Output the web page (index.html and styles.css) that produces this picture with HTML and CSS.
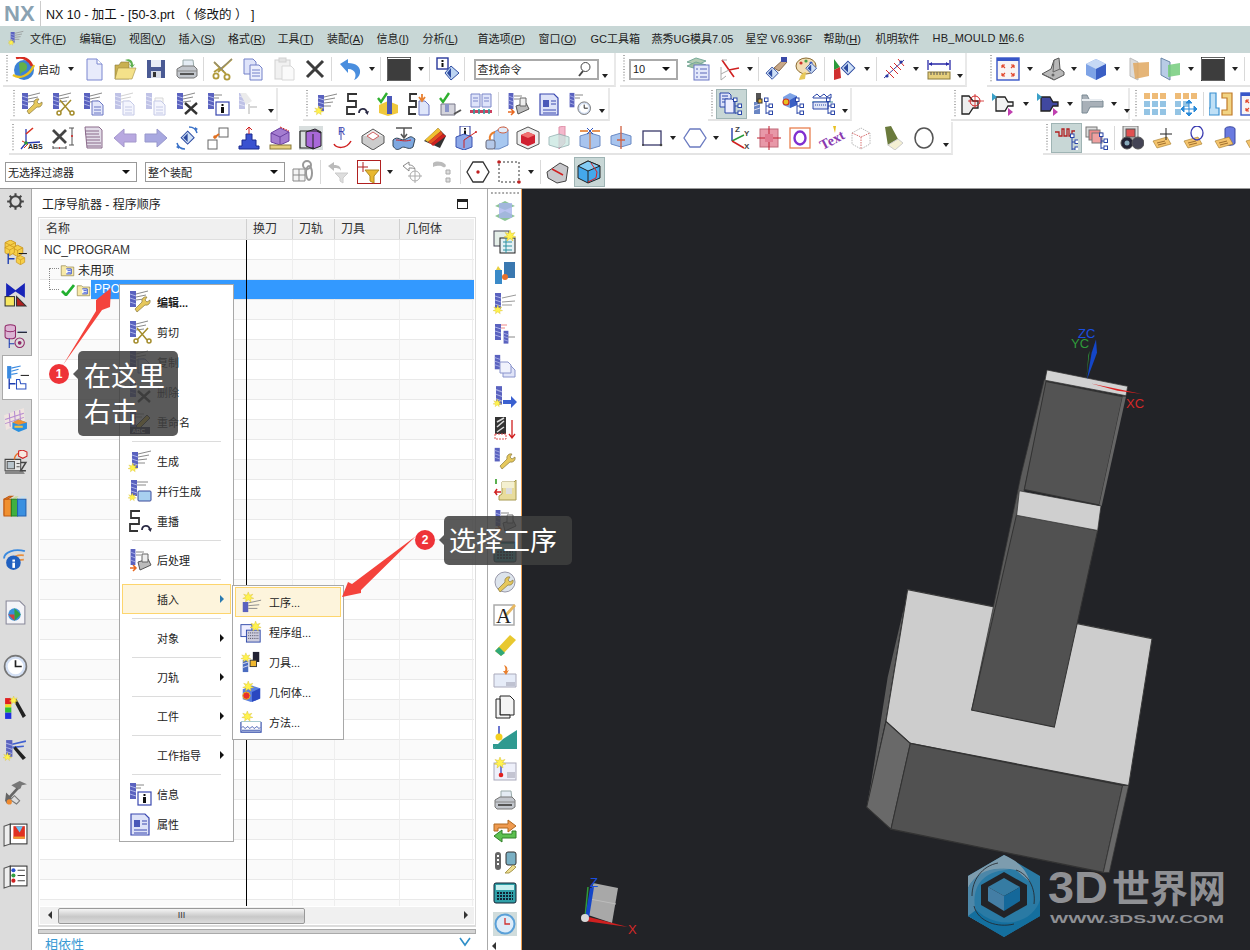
FILE: index.html
```html
<!DOCTYPE html>
<html lang="zh">
<head>
<meta charset="utf-8">
<title>NX 10 - 加工</title>
<link rel="stylesheet" href="styles.css">
</head>
<body>
<svg class="defs" width="0" height="0" aria-hidden="true">
<defs>
<g id="T"><rect x="2" y="1" width="6" height="16" fill="#5a62bf"/><path d="M2 4l6 2M2 8l6 2M2 12l6 2" stroke="#a9b0e6"/></g>
<path id="F" d="M8 4l12-3M8 7l10-2M8 10l8-1" stroke="#8a8a8a" fill="none"/>
<path id="W" d="M9 22l8-7a4 4 0 0 0 5-5l-3 2-2-2 2-3a4 4 0 0 0-5 5l-7 7z" fill="#e6c85c" stroke="#8a7a40" stroke-width=".7"/>
<g id="S" fill="none" stroke="#a48c2c" stroke-width="1.5"><path d="M9 8l10 12M20 8L9 20"/><circle cx="8" cy="21" r="2"/><circle cx="21" cy="21" r="2"/></g>
<g id="D"><path d="M10 9h7l4 4v10H10z" fill="#e3e7fa" stroke="#6a76c4"/><path d="M12 15h7M12 18h7M12 21h7" stroke="#6a76c4"/></g>
<path id="X" d="M10 11l12 11M22 11L10 22" stroke="#333" stroke-width="2.4"/>
<g id="Sp"><path d="M6 0l1.4 3.6L11 2.5 8.6 5.6 12 7l-3.6.8L9 11 6 8.6 3 11l.6-3.2L0 7l3.4-1.4L1 2.5l3.6 1.1z" fill="#fff24e" stroke="#d0b420" stroke-width=".4"/></g>
<g id="Tr" fill="#fff" stroke="#2b46a8"><path d="M16 9v13M16 14h3M16 21h3" fill="none"/><rect x="19" y="12" width="3.5" height="3.5"/><rect x="19" y="19" width="3.5" height="3.5"/><rect x="14.5" y="6" width="3.5" height="3.5"/></g>
<g id="Fo"><path d="M2 6h7l2 2h11v14H2z" fill="#f7e9a8" stroke="#8a7a40"/><path d="M10 11h8v8h-8" fill="#fff" stroke="#1c3cd0" stroke-width="1.4"/><path d="M12 13.5h5M12 16.5h5" stroke="#1c3cd0" stroke-width="1.2"/></g>
<g id="Cu"><path d="M12 2l10 5v11l-10 5-10-5V7z" fill="#7ea3e6"/><path d="M12 2l10 5-10 5L2 7z" fill="#c5d8f5"/><path d="M12 12l10-5v11l-10 5z" fill="#3a5fc4"/></g>
<g id="Clk"><circle cx="12" cy="12" r="10.5" fill="#d4e0f4" stroke="#777" stroke-width="1.6"/><circle cx="12" cy="12" r="7.5" fill="#fff"/><path d="M12 6v6h6" stroke="#222" stroke-width="1.6" fill="none"/></g>
<g id="Tg"><path d="M2 15l14-4 4 7-14 4z" fill="#f4c36c" stroke="#a37a28" stroke-width=".6"/><path d="M6 17l8-2M7 19l8-2" stroke="#8a5a20" stroke-width=".8"/></g>
<g id="Dm"><path d="M12 3l9 9-9 9-9-9z" fill="#cfe0f6" stroke="#2c4aa0" stroke-width="1.4"/><path d="M12 6v12l-6-6z" fill="#2c4aa0"/></g>
<g id="YCb"><path d="M6 0l5 2.500v5.500L6 11 1 8V2.500z" fill="#f6cf48" stroke="#c8921c" stroke-width=".8"/><path d="M1 2.500L6 5l5-2.500M6 5v6" fill="none" stroke="#c8921c" stroke-width=".7"/></g>
</defs>
<symbol id="fo" viewBox="0 0 24 24"><use href="#Fo"/></symbol>
<symbol id="globe" viewBox="0 0 24 24"><circle cx="13" cy="13" r="10" fill="#3c82d6"/><path d="M8 6c5-2 9 1 8 5s-6 3-7 7" fill="#63b04a"/><path d="M2 18C8 22 18 20 23 8" stroke="#e8c020" stroke-width="2.4" fill="none"/><path d="M5 1c7-2 14 2 16 8" stroke="#d62c20" stroke-width="2.6" fill="none"/></symbol>
<symbol id="newdoc" viewBox="0 0 24 24"><path d="M5 2h10l5 5v16H5z" fill="#e8ebfb" stroke="#7a86d0"/><path d="M15 2v5h5" fill="#fff" stroke="#7a86d0"/></symbol>
<symbol id="folder" viewBox="0 0 24 24"><path d="M2 22V8h4l2-3h8v17z" fill="#c9b050" stroke="#8a7a38" stroke-width=".6"/><path d="M2 22l3-11h18l-4 11z" fill="#f4e18a" stroke="#a08c40" stroke-width=".6"/><path d="M12 3c4-2 8 0 8 5l2-1-3 4-3-4 2 1c0-3-3-4-6-5z" fill="#5eb050"/></symbol>
<symbol id="save" viewBox="0 0 24 24"><path d="M3 3h18v18H3z" fill="#4a5a94"/><rect x="7" y="3" width="10" height="7" fill="#e8ecf6"/><rect x="7" y="14" width="10" height="7" fill="#d7dbe6"/><rect x="9" y="15" width="3" height="5" fill="#333"/></symbol>
<symbol id="print" viewBox="0 0 24 24"><path d="M8 3h10l1 8H8z" fill="#e4ecf4" stroke="#9aa"/><path d="M2 12l5-3h12l3 3v7l-3 2H4l-2-2z" fill="#c2c6cc" stroke="#777"/><path d="M2 14h20" stroke="#888"/><rect x="5" y="16" width="14" height="2" fill="#555"/></symbol>
<symbol id="scis" viewBox="0 0 24 24"><g fill="none" stroke="#b09a3c" stroke-width="1.8"><path d="M22 2L8 15M4 5l12 12M10 11l-6 4"/><circle cx="6" cy="19" r="2.6"/><circle cx="17" cy="20" r="2.6"/></g><path d="M22 2L10 12M4 5l10 9" stroke="#888" stroke-width="1"/></symbol>
<symbol id="copy" viewBox="0 0 24 24"><path d="M3 2h9l3 3v12H3z" fill="#dfe4fa" stroke="#7380c8"/><path d="M9 8h9l3 3v12H9z" fill="#eceffd" stroke="#7380c8"/><path d="M11 13h8M11 16h8M11 19h8" stroke="#7380c8"/></symbol>
<symbol id="paste" viewBox="0 0 24 24"><rect x="3" y="3" width="15" height="19" fill="#ddd" stroke="#888"/><rect x="7" y="1" width="7" height="4" fill="#bbb" stroke="#888"/><path d="M10 9h9l3 3v11H10z" fill="#f4f4f4" stroke="#999"/></symbol>
<symbol id="x" viewBox="0 0 24 24"><path d="M4 4l16 16M20 4L4 20" stroke="#3c3c3c" stroke-width="3"/></symbol>
<symbol id="undo" viewBox="0 0 24 24"><path d="M2 7l8-5v4c8 0 13 4 12 10-.5 3-3 6-6 7 3-4 2-11-6-11v4z" fill="#4a8ede"/></symbol>
<symbol id="blackbox" viewBox="0 0 24 24"><rect x="0" y="0" width="24" height="24" fill="#fff" stroke="#222" stroke-width="1.4"/><rect x="1" y="2" width="22" height="21" fill="#3d3d3d"/></symbol>
<symbol id="infod" viewBox="0 0 24 24"><rect x="1" y="1" width="11" height="11" fill="#fff" stroke="#28389c" stroke-width="1.4"/><path d="M5.5 3h2v2h-2zM5.5 6h2v4h-2z" fill="#111"/><path d="M15 9l8 7-8 7-6-7z" fill="#bcd4f2" stroke="#2c4aa0"/><path d="M15 11v10l-4-5z" fill="#2c4aa0"/></symbol>
<symbol id="layers" viewBox="0 0 24 24"><path d="M1 5l9-4 10 3-9 4z" fill="#b4ccb4" stroke="#7a9"/><path d="M1 9l9-4 10 3-9 4z" fill="#a0c0a0" stroke="#7a9"/><rect x="8" y="8" width="15" height="15" fill="#e3e8fb" stroke="#6a76c4"/><path d="M10 12h2M14 12h7M10 16h2M14 16h7M10 20h2M14 20h7" stroke="#5a66b8"/></symbol>
<symbol id="csys" viewBox="0 0 24 24"><path d="M12 13l10-2M12 13L5 3M12 13l5 7" stroke="#d02020" stroke-width="1.6" fill="none"/><path d="M5 3h5M12 13L4 17M4 10v13M4 23l5-4" stroke="#aaa" fill="none"/></symbol>
<symbol id="handd" viewBox="0 0 24 24"><path d="M10 11L20 2l3 3-8 9z" fill="#c8a888" stroke="#8a6c4c"/><rect x="17" y="0" width="6" height="5" fill="#3a4aa8"/><use href="#Dm" transform="translate(0 8) scale(.68)"/></symbol>
<symbol id="palette" viewBox="0 0 24 24"><ellipse cx="11" cy="9" rx="10" ry="8" fill="#f2deb4" stroke="#8a6a30"/><circle cx="6" cy="6" r="1.6" fill="#d0342c"/><circle cx="11" cy="4" r="1.6" fill="#46a046"/><circle cx="16" cy="6" r="1.6" fill="#3a5ed0"/><use href="#Dm" transform="translate(9 4) scale(.6)"/><path d="M4 23c1-5 4-8 7-8l-1 7z" fill="#e8c95a"/></symbol>
<symbol id="cdiam" viewBox="0 0 24 24"><use href="#Dm" transform="translate(6 2) scale(.75)"/><path d="M1 2l6 8-6 3z" fill="#2a9a3a"/><path d="M1 13l6-3 1 11-7 2z" fill="#d03030"/></symbol>
<symbol id="axis" viewBox="0 0 24 24"><path d="M2 21L22 3" stroke="#3a3aa0" stroke-width="1"/><path d="M4 13l8 8M8 9l8 8M12 6l7 7M16 2l6 7" stroke="#d82828" stroke-width="1"/><circle cx="5" cy="19" r="1.6" fill="#2838a0"/><circle cx="19" cy="5" r="1.6" fill="#2838a0"/></symbol>
<symbol id="ruler" viewBox="0 0 24 24"><path d="M1 3v10M23 3v10M2 7h20" stroke="#2a2aa8" stroke-width="1.3"/><path d="M2 7l3-2v4zM22 7l-3-2v4z" fill="#2a2aa8"/><rect x="1" y="15" width="22" height="7" fill="#e6cf7c" stroke="#8a7a3a"/><path d="M4 15v3M7 15v3M10 15v3M13 15v3M16 15v3M19 15v3" stroke="#555"/></symbol>
<symbol id="fit" viewBox="0 0 24 24"><rect x="1" y="1" width="22" height="22" fill="#f8f4f4" stroke="#3856c8" stroke-width="1.4"/><rect x="1" y="1" width="22" height="3" fill="#3856c8"/><path d="M6 8l3 3M6 8h3M6 8v3M18 8l-3 3M18 8h-3M18 8v3M6 19l3-3M6 19h3M6 19v-3M18 19l-3-3M18 19h-3M18 19v-3" stroke="#e2472c" stroke-width="1.2" fill="none"/></symbol>
<symbol id="brkt" viewBox="0 0 24 24"><path d="M1 17l9-5 3-9 5-2 1 11 4 3v3l-10 5z" fill="#b8b8b8" stroke="#555"/><path d="M1 17l11 5M13 3l-1 12 7-3" fill="none" stroke="#666"/><circle cx="12" cy="18" r="1.5" fill="#666"/></symbol>
<symbol id="cube" viewBox="0 0 24 24"><use href="#Cu"/></symbol>
<symbol id="oplane" viewBox="0 0 24 24"><path d="M3 1l8 4v18l-8-4z" fill="#dcdcdc" stroke="#bbb"/><path d="M6 6l16-1v14l-14 3z" fill="#e0a860" opacity=".85"/></symbol>
<symbol id="gplane" viewBox="0 0 24 24"><path d="M3 1l9 4v18l-9-5z" fill="#b8cce6" stroke="#6a86a8"/><path d="M10 8l12-2v12l-12 2z" fill="#74cc7c" opacity=".85"/></symbol>
<symbol id="tedit" viewBox="0 0 24 24"><use href="#T"/><use href="#F"/><use href="#W"/></symbol>
<symbol id="tcut" viewBox="0 0 24 24"><use href="#T"/><use href="#F"/><use href="#S"/></symbol>
<symbol id="tcopy" viewBox="0 0 24 24"><use href="#T"/><use href="#F"/><use href="#D"/></symbol>
<symbol id="tpaste" viewBox="0 0 24 24"><use href="#T"/><path d="M11 6h8v14h-8z" fill="#eee" stroke="#999"/><use href="#D"/></symbol>
<symbol id="tdel" viewBox="0 0 24 24"><use href="#T"/><use href="#F"/><use href="#X"/></symbol>
<symbol id="tinfo" viewBox="0 0 24 24"><use href="#T"/><path d="M8 3h8M8 6h5" stroke="#888"/><rect x="10" y="10" width="13" height="13" fill="#fff" stroke="#3a48b0" stroke-width="1.2"/><path d="M15.5 12h2v2h-2zM15 15h3v6h-3z" fill="#111"/></symbol>
<symbol id="tmov" viewBox="0 0 24 24"><use href="#T"/><path d="M3 1l6 0 6 8-6 4" fill="#ccc"/><path d="M12 12v10M12 15h8" stroke="#999" fill="none" stroke-width="2"/></symbol>
<symbol id="gen" viewBox="0 0 24 24"><use href="#T" transform="translate(2 2)"/><path d="M10 5l13-3M10 8l11-2M10 11l9-1M10 14l7 0" stroke="#8a8a8a" fill="none"/><use href="#Sp" transform="translate(0 14) scale(.8)"/></symbol>
<symbol id="gensub" viewBox="0 0 24 24"><use href="#T" transform="translate(1 0)"/><use href="#Sp" transform="translate(0 14) scale(.7)"/><path d="M9 3h11M9 6h9" stroke="#888"/><rect x="10" y="12" width="13" height="10" rx="1" fill="#a8d0f0" stroke="#3a4a9a"/></symbol>
<symbol id="replay" viewBox="0 0 24 24"><path d="M12 2H3v7h8v6H2v7h8" fill="none" stroke="#333" stroke-width="1.8"/><path d="M14 21c0-5 7-6 8 0" fill="none" stroke="#2a2a44" stroke-width="1.8"/><path d="M20 20l2.500 3 1.500-4z" fill="#2a2a44"/></symbol>
<symbol id="verify" viewBox="0 0 24 24"><path d="M2 6l3 4 6-9" stroke="#2fb02f" stroke-width="2.400" fill="none"/><path d="M3 13l9-4 10 4v8l-10 3-9-3z" fill="#f0c83c"/><path d="M11 4h5v18h-5z" fill="#4a58b8"/></symbol>
<symbol id="postdoc" viewBox="0 0 24 24"><path d="M10 2H3v7h6v6H2v7h7" fill="none" stroke="#333" stroke-width="1.800"/><path d="M12 9h6l4 4v10H12z" fill="#dfe6fa" stroke="#6a76c4"/><path d="M15 2v7M12 5l3 4 3-4" stroke="#e88030" stroke-width="1.800" fill="none"/></symbol>
<symbol id="chkm" viewBox="0 0 24 24"><path d="M2 6l3 4 6-9" stroke="#2fb02f" stroke-width="2.400" fill="none"/><path d="M3 12h14v11H3z" fill="#d4d4dc" stroke="#778"/><path d="M7 12h4v8H7z" fill="#8a94c8"/><path d="M16 22l7-4" stroke="#555" stroke-width="2"/></symbol>
<symbol id="shop" viewBox="0 0 24 24"><path d="M2 2h9v13H2zM13 2h9v13h-9z" fill="#dfe4fa" stroke="#7a86c8"/><path d="M4 6h5M4 9h5M15 6h5M15 9h5" stroke="#7a86c8"/><rect x="1" y="18" width="22" height="3" fill="#cc4060"/><path d="M5 17v5M10 17v5M15 17v5M20 17v5" stroke="#30a0a0" stroke-width="1.600"/></symbol>
<symbol id="tpost" viewBox="0 0 24 24"><use href="#T" transform="translate(1 0) scale(.8 1)"/><path d="M8 4h8M8 7h5" stroke="#888"/><path d="M10 14l10-3 3 6-11 5z" fill="#bbb" stroke="#555"/><path d="M14 6h6v8h-6z" fill="#eee" stroke="#666"/><path d="M2 20h5M5 17l3 3-3 3" stroke="#e86820" stroke-width="1.500" fill="none"/></symbol>
<symbol id="tlist" viewBox="0 0 24 24"><path d="M3 2h14l4 4v17H3z" fill="#dde2f8" stroke="#3a48b0" stroke-width="1.200"/><path d="M6 8h6v7H6z" fill="#4a58b8"/><path d="M14 9h5M14 12h5M6 18h13M6 21h13" stroke="#3a48b0"/></symbol>
<symbol id="tclk" viewBox="0 0 24 24"><use href="#T" transform="scale(.8 .9)"/><path d="M7 3h8M7 6h5" stroke="#888"/><use href="#Clk" transform="translate(9 9) scale(.6)"/></symbol>
<symbol id="pv" viewBox="0 0 24 24"><path d="M1 1h9l2 2v12H1z" fill="#dde2fa" stroke="#2b46a8"/><path d="M3 4h6M3 7h6M3 10h6" stroke="#2b46a8"/><path d="M6 7h7l2 2v12H6z" fill="#eef" stroke="#2b46a8"/><use href="#Tr"/></symbol>
<symbol id="mv" viewBox="0 0 24 24"><path d="M6 1h5v9H6z" fill="#555"/><path d="M4 10h6v12H4z" fill="#6a86c4"/><path d="M4 14l6-2M4 18l6-2" stroke="#dde"/><rect x="8" y="7" width="4" height="4" fill="#e8b030" stroke="#333"/><use href="#Tr"/></symbol>
<symbol id="gv" viewBox="0 0 24 24"><path d="M2 5l7-4 7 3v9l-7 3-7-3z" fill="#7ea3e6"/><path d="M9 8l7-4v9l-7 3z" fill="#3a5fc4"/><circle cx="5" cy="10" r="3" fill="#e8c020" stroke="#d03020" stroke-width="1.200"/><use href="#Tr"/></symbol>
<symbol id="mtv" viewBox="0 0 24 24"><path d="M1 5l4-3 3 3 4-3 3 3 4-3v4H1z" fill="#fff" stroke="#2b46a8"/><path d="M0 10h21" stroke="#3d8a9a"/><path d="M1 10h15v7H1z" fill="#dfe6f6" stroke="#2b46a8"/><path d="M3 13h11" stroke="#2b46a8" stroke-dasharray="1 1"/><use href="#Tr"/></symbol>
<symbol id="lat1" viewBox="0 0 24 24"><path d="M1 4h7l4 5h5v7h-5l-4 6H1z" fill="#eee" stroke="#222" stroke-width="1.300"/><circle cx="14" cy="9" r="5" fill="none" stroke="#d02020"/><path d="M14 2v14M7 9h16" stroke="#d02020" stroke-width=".8"/></symbol>
<symbol id="lat2" viewBox="0 0 24 24"><path d="M4 5h9l3 5h5v4h-5l-3 5H4z" fill="#f2f2f2" stroke="#222" stroke-width="1.300"/><path d="M0 1l5 4-5 4z" fill="#3aa0c8"/><path d="M16 16l5 4-5 4z" fill="#c040b0"/></symbol>
<symbol id="lat3" viewBox="0 0 24 24"><path d="M4 5h9l3 5h5v4h-5l-3 5H4z" fill="#4048a0" stroke="#222" stroke-width="1.300"/><path d="M0 1l5 4-5 4z" fill="#3aa0c8"/><path d="M16 16l5 4-5 4z" fill="#c040b0"/></symbol>
<symbol id="lat4" viewBox="0 0 24 24"><path d="M2 3h5l3 6h13v6H10l-3 6H2z" fill="#a8b0b8" stroke="#7a8a94"/><path d="M2 8h20" stroke="#e8ecf0" stroke-width="2"/></symbol>
<symbol id="grid1" viewBox="0 0 24 24"><g fill="#eebb77"><rect x="1" y="1" width="6" height="6"/><rect x="9" y="1" width="6" height="6"/><rect x="17" y="1" width="6" height="6"/></g><g fill="#94c4e4"><rect x="1" y="9" width="6" height="6"/><rect x="9" y="9" width="6" height="6"/><rect x="17" y="9" width="6" height="6"/><rect x="1" y="17" width="6" height="6"/><rect x="9" y="17" width="6" height="6"/><rect x="17" y="17" width="6" height="6"/></g></symbol>
<symbol id="grid2" viewBox="0 0 24 24"><g fill="#eebb77"><rect x="1" y="1" width="6" height="6"/><rect x="9" y="1" width="6" height="6"/><rect x="17" y="1" width="6" height="6"/></g><g fill="#94c4e4"><rect x="1" y="9" width="6" height="6"/><rect x="9" y="9" width="6" height="6"/><rect x="1" y="17" width="6" height="6"/></g><path d="M15 10v13M9 17h13M15 8l-3 3h6zM15 24l-3-3h6zM7 17l3-3v6zM23 17l-3-3v6z" fill="#2a8ad8" stroke="#2a8ad8"/></symbol>
<symbol id="bkt2" viewBox="0 0 24 24"><path d="M1 1h6v15h3v7H0v-7h1z" fill="#bfe0f6" stroke="#3a90d0" stroke-width="1.200"/><path d="M13 1h10v22H13v-5h5V6h-5z" fill="#f2d484" stroke="#c07a28" stroke-width="1.200"/></symbol>
<symbol id="abs" viewBox="0 0 24 24"><path d="M6 17V3M6 17l14-1M6 17l-5 6" stroke="#2a3ab0" stroke-width="1.300"/><path d="M6 8l7-6" stroke="#d83020" stroke-width="1.600"/><path d="M2 15l6 3-4 4" stroke="#d83020" fill="none"/><circle cx="6" cy="17" r="1.800" fill="#2a9a3a"/></symbol>
<symbol id="xdim" viewBox="0 0 24 24"><path d="M2 4l13 13M15 4L2 17" stroke="#444" stroke-width="2.800"/><path d="M18 2h5M21 2v17M18 19h5M2 20v3M15 20v3M2 22h13" stroke="#555" fill="none"/><path d="M20 10h2M8 22h1" stroke="#d02020" stroke-width="1.500"/></symbol>
<symbol id="stack" viewBox="0 0 24 24"><path d="M3 1h14l3 3v18H5z" fill="#e2dce8" stroke="#8a6a8a"/><path d="M3 5h14M3 8h14M4 11h14M4 14h14M5 17h14M5 20h14" stroke="#8a6a8a"/></symbol>
<symbol id="al" viewBox="0 0 24 24"><path d="M1 12L11 3v5h12v8H11v5z" fill="#b8a8e0" stroke="#a498cc"/></symbol>
<symbol id="ar" viewBox="0 0 24 24"><path d="M23 12L13 3v5H1v8h12v5z" fill="#a8a8e0" stroke="#9898cc"/></symbol>
<symbol id="dsw" viewBox="0 0 24 24"><use href="#Dm" transform="translate(4 3) scale(.72)"/><path d="M14 1c4 0 7 2 8 6M10 23c-4 0-7-2-8-6" stroke="#3a72c8" fill="none" stroke-width="1.500"/><path d="M20 1l3 2-3 2zM4 23l-3-2 3-2z" fill="#3a72c8"/></symbol>
<symbol id="sqs" viewBox="0 0 24 24"><rect x="2" y="14" width="9" height="9" fill="#fff" stroke="#666"/><rect x="13" y="2" width="9" height="9" fill="#fff" stroke="#666"/><path d="M8 12l5-4" stroke="#e07020" stroke-width="2"/><circle cx="9" cy="11" r="1.800" fill="#e07020"/></symbol>
<symbol id="blu" viewBox="0 0 24 24"><path d="M5 20V14h4V8h6v6h4v6h3v3H2v-3z" fill="#3a52d0" stroke="#1a2a90"/><path d="M12 8V2M9 4l3-3 3 3" stroke="#d02020" fill="none"/></symbol>
<symbol id="rulb" viewBox="0 0 24 24"><path d="M3 7l9-5 9 4v9l-9 4-9-3z" fill="#a47cd0" stroke="#6a40a0"/><path d="M3 7l9 4 9-5M12 11v8" stroke="#6a40a0" fill="none"/><rect x="2" y="19" width="21" height="4" fill="#e6cf7c" stroke="#8a7a3a"/><path d="M12 1l9 4" stroke="#d02020" stroke-dasharray="2 1"/></symbol>
<symbol id="purp" viewBox="0 0 24 24"><rect x="0" y="0" width="24" height="24" fill="#d8dede"/><path d="M7 6l9-3 6 3v14l-8 3-7-3z" fill="#a868d8" stroke="#222"/><path d="M1 5h17l4 2M1 5v17h14" fill="none" stroke="#222" stroke-width="1.200"/><path d="M14 8v15" stroke="#222"/></symbol>
<symbol id="rr" viewBox="0 0 24 24"><path d="M4 18c2 4 12 6 17-3" fill="none" stroke="#d02020" stroke-width="1.500"/><path d="M11 14V2" stroke="#3a46b0"/></symbol>
<symbol id="mesh" viewBox="0 0 24 24"><path d="M1 10l11-7 11 7-11 7z" fill="#eee" stroke="#555"/><path d="M1 10v7l11 7 11-7v-7" fill="#ccc" stroke="#555"/><path d="M6 10l6-4 6 4-6 4z" fill="#fff" stroke="#d06060"/></symbol>
<symbol id="surf" viewBox="0 0 24 24"><path d="M1 14c5-5 8 2 13-1s5-3 9 0l-2 8c-5 4-8-2-12 1s-6 1-8-2z" fill="#7ea8e0" stroke="#345"/><path d="M4 14c5 0 8 2 15 0" stroke="#d02020" fill="none"/><path d="M4 2h16M12 2v10M9 8l3 4 3-4" stroke="#555" fill="none" stroke-width="1.500"/></symbol>
<symbol id="strp" viewBox="0 0 24 24"><path d="M1 15L15 2l8 8-6 12z" fill="#333"/><path d="M2 14L15 2l3 3L5 16z" fill="#f0c030"/><path d="M5 16L18 5l2 3L8 18z" fill="#e85020"/><path d="M8 18L20 8l3 2-13 10z" fill="#d02020"/></symbol>
<symbol id="infc" viewBox="0 0 24 24"><rect x="6" y="0" width="10" height="10" fill="#fff" stroke="#28389c"/><path d="M10 2h2v1.500h-2zM10 4.500h2v4h-2z" fill="#111"/><path d="M2 11l8-3 8 3v10l-8 3-8-3z" fill="#8ca8e8" stroke="#3a52b0"/><path d="M10 14l12-8M10 14v8" stroke="#d02020"/><circle cx="22" cy="6" r="1" fill="#d02020"/></symbol>
<symbol id="cyl" viewBox="0 0 24 24"><path d="M9 6l10-5 4 3v15l-9 4H9z" fill="#a8c8f0" stroke="#6a8ac4"/><ellipse cx="18" cy="4" rx="5" ry="3" fill="#e0ecfa" stroke="#d06040"/><rect x="1" y="14" width="9" height="9" rx="2" fill="#b4c8e8" stroke="#667"/><path d="M5 14c-1-4 1-7 5-8" stroke="#e88030" stroke-width="2" fill="none"/></symbol>
<symbol id="rcube" viewBox="0 0 24 24"><path d="M12 1l11 5v12l-11 5-11-5V6z" fill="#eee" stroke="#555"/><path d="M12 6l7 3v8l-7 3-7-3V9z" fill="#d02030"/><path d="M12 6l7 3-7 3-7-3z" fill="#f07070"/></symbol>
<symbol id="pink" viewBox="0 0 24 24"><path d="M12 1l6-1v17l-6 6z" fill="#f4b8cc" stroke="#e090a8"/><path d="M2 11l10-3 10 3v8l-10 3-10-3z" fill="#c8e6e0" opacity=".75" stroke="#8aa"/></symbol>
<symbol id="split" viewBox="0 0 24 24"><path d="M2 10l10-3 10 3v10l-10 3-10-3z" fill="#a8c4ee" stroke="#6a8ac4"/><path d="M12 5v18" stroke="#e07020"/><path d="M2 5h8M22 5h-8" stroke="#e07020" stroke-width="1.500"/><path d="M9 2l3 3-3 3M15 2l-3 3 3 3" stroke="#2a52c0" fill="none"/></symbol>
<symbol id="split2" viewBox="0 0 24 24"><path d="M2 10l10-3 10 3v8l-10 3-10-3z" fill="#a8c4ee" stroke="#6a8ac4"/><path d="M12 0v23M8 14h8" stroke="#d06040" stroke-width="1.300"/></symbol>
<symbol id="rect" viewBox="0 0 24 24"><rect x="3" y="5" width="18" height="14" fill="#fff" stroke="#3a3a6a" stroke-width="1.300"/><circle cx="21" cy="19" r="1.300" fill="#444"/><circle cx="3" cy="19" r="1" fill="#444"/></symbol>
<symbol id="hexa" viewBox="0 0 24 24"><path d="M7 3h10l6 9-6 9H7l-6-9z" fill="#fff" stroke="#6a7ac0" stroke-width="1.300"/></symbol>
<symbol id="xyz" viewBox="0 0 24 24"><path d="M6 15V2" fill="none" stroke="#3048b0" stroke-width="1.500"/><path d="M6 15l12-6" stroke="#2a9a3a" stroke-width="1.500"/><path d="M6 15l12 7" stroke="#d02020" stroke-width="1.500"/></symbol>
<symbol id="rsq" viewBox="0 0 24 24"><rect x="3" y="3" width="18" height="18" fill="#e898a8" stroke="#c06878"/><path d="M12 0v24M0 12h24" stroke="#c02030"/><path d="M8 8h8v8H8z" fill="#e07a90"/></symbol>
<symbol id="oo" viewBox="0 0 24 24"><rect x="2" y="2" width="20" height="20" fill="#fff" stroke="#e88050" stroke-width="1.300"/><ellipse cx="12" cy="12" rx="5.500" ry="6.500" fill="none" stroke="#8030d0" stroke-width="2.400"/></symbol>
<symbol id="wcube" viewBox="0 0 24 24"><path d="M2 7l9-5 9 5v11l-9 5-9-5z" fill="#fff" stroke="#b8b8b8" stroke-dasharray="1.500 1"/><path d="M2 7l9 4 9-4M11 11v12" stroke="#d87070" fill="none" stroke-dasharray="1.500 1"/></symbol>
<symbol id="bell" viewBox="0 0 24 24"><path d="M4 1l6-1 7 13-10 7z" fill="#6a7a3c"/><path d="M7 19l10-6 5 4-8 7z" fill="#f4f0d4" stroke="#ccc"/></symbol>
<symbol id="circ" viewBox="0 0 24 24"><ellipse cx="12" cy="12" rx="9" ry="10" fill="none" stroke="#555" stroke-width="1.600"/></symbol>
<symbol id="tpv2" viewBox="0 0 24 24"><rect x="0" y="0" width="24" height="24" fill="#c8d7d6"/><path d="M1 6h4v4h3V3h2v7h3V3h2v7h3V5h3" fill="none" stroke="#b02020" stroke-width="1.300"/><use href="#Tr" transform="translate(2 2)"/></symbol>
<symbol id="tree2" viewBox="0 0 24 24"><rect x="1" y="1" width="11" height="10" fill="#ddd" stroke="#777"/><rect x="4" y="4" width="11" height="10" fill="#e88" stroke="#777"/><rect x="7" y="7" width="10" height="10" fill="#f0a0a0" stroke="#777"/><use href="#Tr" transform="translate(0 1)"/></symbol>
<symbol id="binoc" viewBox="0 0 24 24"><rect x="3" y="0" width="15" height="13" fill="#ddd" stroke="#777"/><rect x="6" y="3" width="9" height="8" fill="#e05050" stroke="#555"/><circle cx="7" cy="17" r="6" fill="#223" stroke="#555"/><circle cx="18" cy="17" r="6" fill="#445" stroke="#555"/><circle cx="7" cy="17" r="2.500" fill="#8ab"/></symbol>
<symbol id="tgp" viewBox="0 0 24 24"><use href="#Tg"/><path d="M15 2v12M9 8h12" stroke="#222"/></symbol>
<symbol id="tgo" viewBox="0 0 24 24"><use href="#Tg"/><ellipse cx="15" cy="7" rx="6" ry="7" fill="none" stroke="#3a3ab0" stroke-width="1.300"/></symbol>
<symbol id="tgc" viewBox="0 0 24 24"><path d="M12 3c0-3 10-3 10 0v14c0 3-10 3-10 0z" fill="#6a7ae0" stroke="#3a48a0"/><use href="#Tg"/></symbol>
<symbol id="link" viewBox="0 0 24 24"><path d="M2 9h12v12H2zM2 15h12M8 9v12" fill="#f4f4f4" stroke="#888"/><circle cx="16" cy="5" r="4" fill="none" stroke="#999" stroke-width="2"/><ellipse cx="18" cy="13" rx="3" ry="7" fill="none" stroke="#999" stroke-width="2"/></symbol>
<symbol id="ufil" viewBox="0 0 24 24"><path d="M2 6l6-4v3c5 0 7 2 7 6-1-3-4-3-7-3v3z" fill="#bbb"/><path d="M9 13h13l-5 5v5l-3-2v-3z" fill="#ddd" stroke="#ccc"/></symbol>
<symbol id="fil" viewBox="0 0 24 24"><rect x=".5" y=".5" width="23" height="23" fill="#fff" stroke="#b02020"/><path d="M8 10h14l-5 6v7l-4-2v-5z" fill="#e8b830" stroke="#b08820"/><path d="M6 2v10M1 7h10" stroke="#b02020"/></symbol>
<symbol id="utgt" viewBox="0 0 24 24"><path d="M3 6l6-4v3c4 0 5 2 6 4-2-1-3-1-6-1v3z" fill="none" stroke="#888"/><circle cx="15" cy="16" r="5" fill="none" stroke="#aaa"/><path d="M15 9v14M8 16h14" stroke="#aaa"/></symbol>
<symbol id="chn" viewBox="0 0 24 24"><path d="M2 3c3-2 8-2 12 1 2 2 0 4-2 3S8 5 2 7z" fill="#bbb"/><path d="M15 10h4v4h-4zM15 18h4v4h-4z" fill="#ddd" stroke="#aaa"/></symbol>
<symbol id="hexd" viewBox="0 0 24 24"><path d="M7 2h10l6 10-6 10H7L1 12z" fill="#fff" stroke="#333" stroke-width="1.300"/><circle cx="12" cy="12" r="1.700" fill="#c02020"/></symbol>
<symbol id="rectd" viewBox="0 0 24 24"><rect x="2" y="2" width="20" height="20" fill="none" stroke="#333" stroke-dasharray="2 2"/><circle cx="2" cy="2" r="1.800" fill="#c02020"/><circle cx="22" cy="22" r="1.800" fill="#c02020"/></symbol>
<symbol id="face" viewBox="0 0 24 24"><path d="M1 12L14 3l8 4-2 14-9 2-9-5z" fill="#c8c8cc" stroke="#444"/><path d="M6 9l11 6" stroke="#d02020" stroke-width="1.500"/></symbol>
<symbol id="cubea" viewBox="0 0 24 24"><path d="M11 1l12 5v12l-12 5L1 18V6z" fill="#44a8ec" stroke="#222"/><path d="M11 1l12 5-12 5L1 6z" fill="#84ccf4" stroke="#222"/><path d="M11 11v12" stroke="#222"/><path d="M14 3l6 9-1 6-8 4" stroke="#e02020" fill="none"/></symbol>
<symbol id="gear" viewBox="0 0 24 24"><circle cx="12" cy="12" r="5" fill="none" stroke="#444" stroke-width="2"/><path d="M12 4v3M12 17v3M4 12h3M17 12h3M6.400 6.400l2 2M15.600 15.600l2 2M6.400 17.600l2-2M15.600 8.400l2-2" stroke="#444" stroke-width="2"/></symbol>
<symbol id="r1" viewBox="0 0 24 24"><use href="#YCb" transform="translate(1 0)"/><use href="#YCb" transform="translate(8 5)"/><use href="#YCb" transform="translate(1 5) scale(.9)"/><path d="M5 13v10M5 18h6" stroke="#1c3cb0" stroke-width="1.300" fill="none"/><path d="M15 13h8" stroke="#222"/><use href="#YCb" transform="translate(12 15) scale(.8)"/></symbol>
<symbol id="r2" viewBox="0 0 24 24"><path d="M3 1l9 7 9-7v14l-9-6-9 6z" fill="#1824b8"/><rect x="2" y="14" width="9" height="9" fill="#f8e860" stroke="#333"/><path d="M13 23V14l9 9z" fill="#b02020" stroke="#333"/></symbol>
<symbol id="r3" viewBox="0 0 24 24"><path d="M2 3c0-3 10-3 10 0v9c0 3-10 3-10 0z" fill="#dcb4d4" stroke="#902868"/><path d="M2 6c2 2 8 2 10 0" fill="none" stroke="#902868"/><path d="M14 8h9M6 14v9M6 19h5" stroke="#1c3cb0" fill="none"/><path d="M14 8h9" stroke="#222"/><circle cx="16" cy="18" r="4.500" fill="none" stroke="#902868"/><circle cx="16" cy="18" r="1.800" fill="#902868"/></symbol>
<symbol id="r4" viewBox="0 0 24 24"><path d="M3 1h4v12H3z" fill="#3a8ae0"/><path d="M7 3l9-2M7 6l7-2M7 9l6-1" stroke="#3a8ae0" fill="none"/><path d="M16 10h8" stroke="#222"/><path d="M5 13v10M5 18h6" stroke="#1c3cb0" fill="none" stroke-width="1.300"/><path d="M12 14h3l1 4h5v5h-9z" fill="#fff" stroke="#2a50c0"/></symbol>
<symbol id="r5" viewBox="0 0 24 24"><path d="M1 7l19-7 1 12-18 9z" fill="#f0e4e0"/><path d="M2 11l18-6M2 15l18-6M6 5l1 13M11 3l1 13M16 2l1 12" stroke="#b58ad0" fill="none"/><path d="M9 14l6-3 8 3v6l-8 3-6-3z" fill="#2a90e0"/><path d="M9 14l6-3 8 3-8 2z" fill="#f09030"/><path d="M11 17h8v2h-8z" fill="#f4c040"/></symbol>
<symbol id="r6" viewBox="0 0 24 24"><path d="M2 9h15v11H2z" fill="#e6e6e6" stroke="#444"/><path d="M4 11h7v7H4z" fill="#b8c4cc" stroke="#555"/><path d="M2 20h17l2 3H2z" fill="#888"/><path d="M13 13h3M13 16h3" stroke="#555"/><path d="M11 9c0-3 2-5 4-6" stroke="#e8702a" stroke-width="1.500" fill="none"/><path d="M15 1l4-1 4 2v4l-4 2-4-2z" fill="#f8e8e0" stroke="#d02020"/><path d="M17 12l5 0-5 8h5" stroke="#444" fill="none" stroke-width="1.400"/></symbol>
<symbol id="r7" viewBox="0 0 24 24"><path d="M1 7l5-3h3L4 7v15H1z" fill="#e88030" stroke="#c05a10"/><path d="M4 7h4v16H1V7z" fill="#f09030" stroke="#c05a10"/><path d="M8 7l4-3h3l-3 3z" fill="#c8d8a0"/><path d="M8 7h6v16H8z" fill="#40b040" stroke="#208020"/><path d="M14 7l4-3h5l-4 3z" fill="#c8e0f0"/><path d="M14 7h8v16h-8z" fill="#3a90e0" stroke="#2060b0"/></symbol>
<symbol id="r8" viewBox="0 0 24 24"><path d="M1 12c0-6 10-10 20-7" fill="none" stroke="#3a8ae0" stroke-width="1.800"/><path d="M6 14c2-3 8-6 14-5M11 15c2-1 6-2 9-2" fill="none" stroke="#e89040" stroke-width="1.600"/><circle cx="10" cy="16" r="7" fill="#2060c0"/><rect x="9" y="13" width="2.500" height="2" fill="#fff"/><rect x="9" y="16" width="2.500" height="5" fill="#fff"/></symbol>
<symbol id="r9" viewBox="0 0 24 24"><path d="M3 1h13l5 5v17H3z" fill="#f4f4f8" stroke="#889"/><circle cx="11" cy="14" r="6" fill="#3a90d8"/><path d="M11 8l6 6-6 6z" fill="#30a040"/><path d="M5 14h6v6z" fill="#d04040"/></symbol>
<symbol id="clk" viewBox="0 0 24 24"><use href="#Clk"/></symbol>
<symbol id="r10" viewBox="0 0 24 24"><rect x="2" y="2" width="6" height="6" fill="#e02020"/><rect x="2" y="8" width="6" height="3" fill="#f0e020"/><rect x="2" y="11" width="6" height="5" fill="#30c030"/><rect x="2" y="16" width="6" height="6" fill="#2030e0"/><path d="M10 4l3-1 9 16-3 2z" fill="#222"/><use href="#Sp" transform="translate(6 0) scale(.7)"/></symbol>
<symbol id="r11" viewBox="0 0 24 24"><use href="#T" transform="translate(1 1)"/><path d="M9 6l13-3M9 9l11-1" stroke="#4060d0" stroke-width="1.500"/><path d="M12 8l10 11-3 2L10 10z" fill="#222"/><use href="#Sp" transform="translate(0 14) scale(.7)"/></symbol>
<symbol id="r12" viewBox="0 0 24 24"><path d="M8 5l8-4 7 3-5 1-1 3-2 1-4-2z" fill="#777"/><path d="M14 8l-8 9" stroke="#666" stroke-width="2.500"/><path d="M3 12l6 6-5 5-2-3z" fill="#666"/><path d="M7 19l4-4 5 5-3 3z" fill="#ddd" stroke="#777"/><circle cx="6" cy="21" r="2.500" fill="#ef8a30"/></symbol>
<symbol id="r13" viewBox="0 0 24 24"><path d="M1 4l6-2v19l-6 2z" fill="#eee" stroke="#555"/><rect x="7" y="2" width="16" height="19" fill="#fff" stroke="#333"/><rect x="10" y="4" width="11" height="12" fill="#e03020"/><path d="M12 4h7l-3 6z" fill="#6ac0f0"/><rect x="10" y="14" width="11" height="2" fill="#f0a030"/></symbol>
<symbol id="r14" viewBox="0 0 24 24"><path d="M1 4l6-2v19l-6 2z" fill="#eee" stroke="#555"/><rect x="7" y="2" width="16" height="19" fill="#fff" stroke="#333"/><circle cx="10" cy="6" r="2" fill="#2a52d0"/><circle cx="10" cy="11" r="2" fill="#30a040"/><circle cx="10" cy="16" r="2" fill="#d02020"/><path d="M14 6h7M14 11h7M14 16h7" stroke="#444"/></symbol>
<symbol id="s1" viewBox="0 0 24 24"><path d="M2 7l10-5 10 5-10 4z" fill="#8ec49a"/><path d="M2 17l10-5 10 5-10 5z" fill="#8ec49a"/><rect x="6" y="4" width="13" height="15" fill="#a8b4ec" opacity=".8"/></symbol>
<symbol id="s2" viewBox="0 0 24 24"><rect x="1" y="1" width="15" height="15" fill="#e4eee8" stroke="#445"/><rect x="7" y="8" width="15" height="15" fill="#e4f0f4" stroke="#222"/><path d="M10 12h9M10 16h9M10 20h9M13 8v15" stroke="#2a90a0"/><use href="#Sp" transform="translate(11 0)"/></symbol>
<symbol id="s3" viewBox="0 0 24 24"><path d="M2 9h7v14H2z" fill="#3a8ac8"/><path d="M3 9l2-4 3 4" fill="#e8d040"/><rect x="11" y="1" width="11" height="16" fill="#3a78b0"/><circle cx="12" cy="16" r="3" fill="#e8702a"/></symbol>
<symbol id="s4" viewBox="0 0 24 24"><use href="#T"/><path d="M9 6l14-3M9 10l13-1M9 13l10 0" stroke="#999"/><use href="#Sp" transform="translate(0 13) scale(.8)"/></symbol>
<symbol id="s5" viewBox="0 0 24 24"><use href="#T"/><path d="M8 2h6M8 5h4" stroke="#e88" fill="none"/><use href="#T" transform="translate(9 7) scale(.8)"/><path d="M15 14h7" stroke="#888"/></symbol>
<symbol id="s6" viewBox="0 0 24 24"><use href="#T" transform="scale(.9)"/><path d="M10 12h8l4 4v7H10z" fill="#e0e4f8" stroke="#8a94cc"/><path d="M7 8h8l3 3v8H7z" fill="#f0f2fc" stroke="#8a94cc"/></symbol>
<symbol id="s7" viewBox="0 0 24 24"><use href="#T" transform="translate(1 0) scale(1 1.150)"/><use href="#Sp" transform="translate(0 14) scale(.7)"/><path d="M10 15h8v-4l6 6-6 6v-4h-8z" fill="#3a60d0"/></symbol>
<symbol id="s8" viewBox="0 0 24 24"><rect x="2" y="1" width="11" height="17" fill="#333"/><path d="M4 6l7-4M4 11l7-6M4 16l7-5" stroke="#ddd" stroke-width="1.500"/><path d="M2 18h11v5H2z" fill="#fff" stroke="#e05050" stroke-dasharray="2 1"/><path d="M19 4v17M16 18l3 4 3-4" stroke="#d02020" fill="none" stroke-width="1.300"/></symbol>
<symbol id="s9" viewBox="0 0 24 24"><use href="#T" transform="scale(.85)"/><use href="#W"/></symbol>
<symbol id="s10" viewBox="0 0 24 24"><path d="M9 4h12l2-2v20H6v-4l3-2z" fill="#e8dc9c" stroke="#a89a50"/><path d="M9 4h12v6H9z" fill="#f4f0d0"/><path d="M13 10h6v6h-6z" fill="#ddd"/><path d="M3 1v5" stroke="#5ab050" stroke-width="2"/><path d="M8 14H2l2-3M2 14l2 3" stroke="#d02020" stroke-width="1.500" fill="none"/></symbol>
<symbol id="s11" viewBox="0 0 24 24"><circle cx="12" cy="11" r="10" fill="#dde4ec" stroke="#99a"/><use href="#W" transform="translate(-2 -1)"/></symbol>
<symbol id="s12" viewBox="0 0 24 24"><rect x="1" y="3" width="20" height="20" fill="#fff" stroke="#aaa" stroke-width="1.500"/><path d="M12 12l9-10 2 2-9 10z" fill="#e8b860"/></symbol>
<symbol id="s13" viewBox="0 0 24 24"><path d="M2 18L17 2l6 5L8 23z" fill="#e8c830"/><path d="M2 18l4-4 6 6-4 3z" fill="#30a878"/></symbol>
<symbol id="s14" viewBox="0 0 24 24"><path d="M1 10h22v13H1z" fill="#e6ecf8" stroke="#aab"/><path d="M13 19h9M13 21h9" stroke="#99a"/><path d="M11 1c3 1 4 3 3 6l2-1-3 5-3-4 2 0c1-2 0-4-1-6z" fill="#e88030"/></symbol>
<symbol id="s15" viewBox="0 0 24 24"><path d="M7 1h10l4 4v15H7z" fill="#f4f4f4" stroke="#222"/><path d="M3 4h4v16h10v3H3z" fill="#f4f4f4" stroke="#222"/></symbol>
<symbol id="s16" viewBox="0 0 24 24"><path d="M0 23l10-10L24 4v19z" fill="#2f9a90"/><path d="M6 0v8" stroke="#3a48c0" stroke-width="1.500"/><circle cx="6" cy="11" r="3.500" fill="#f4d020"/><path d="M0 23v-5l6 0" fill="#2f9a90"/></symbol>
<symbol id="s17" viewBox="0 0 24 24"><rect x="1" y="6" width="22" height="17" fill="#eef0fa" stroke="#aab"/><path d="M8 8v9" stroke="#3a48c0" stroke-width="1.300"/><circle cx="8" cy="18" r="2.300" fill="#e02020"/><path d="M14 16h8M14 18h8M14 20h8" stroke="#99a"/><use href="#Sp" transform="translate(1 0)"/></symbol>
<symbol id="s18" viewBox="0 0 24 24"><path d="M1 12V5h14V1l8 6-8 6v-4H5v3z" fill="#ee9a50" stroke="#b06820"/><path d="M23 12v7H9v4l-8-6 8-6v4h10v-3z" fill="#5cc050" stroke="#308028"/></symbol>
<symbol id="s19" viewBox="0 0 24 24"><rect x="2" y="2" width="6" height="18" rx="3" fill="#666"/><path d="M4 6h2M4 10h2M4 14h2" stroke="#fff" stroke-width="2"/><rect x="13" y="2" width="10" height="13" rx="2" fill="#7ab0c4" stroke="#333"/><path d="M12 23l6-6 2-2 3 2-3 3-4 3z" fill="#eedc90" stroke="#a89a50"/></symbol>
<symbol id="s20" viewBox="0 0 24 24"><rect x="1" y="2" width="22" height="20" rx="2" fill="#30a0a8" stroke="#123"/><rect x="3" y="4" width="18" height="5" fill="#c8f0f0"/><path d="M4 12h16M4 15h16M4 18h16" stroke="#123" stroke-width="2" stroke-dasharray="2 1"/></symbol>
<symbol id="s21" viewBox="0 0 24 24"><rect x="0" y="0" width="24" height="24" fill="#d0dcdc"/><circle cx="12" cy="12" r="9.500" fill="#dcecfa" stroke="#5aa0d8" stroke-width="2"/><path d="M12 6v6h5" stroke="#d03030" stroke-width="1.300" fill="none"/></symbol>
<symbol id="grip" viewBox="0 0 4 30"><path d="M2 0v30" stroke="#aaa" stroke-width="2" stroke-dasharray="1 2"/></symbol>
<symbol id="mrn" viewBox="0 0 24 24"><use href="#T"/><path d="M8 4h8M8 7h6" stroke="#888"/><path d="M8 16L19 5l3 3-11 11z" fill="#e8c030" stroke="#333"/><rect x="2" y="17" width="20" height="7" fill="#222040"/></symbol>
<symbol id="mdel" viewBox="0 0 24 24"><use href="#T"/><use href="#X"/></symbol>
<symbol id="mpg" viewBox="0 0 24 24"><rect x="1" y="4" width="12" height="13" fill="#eef" stroke="#2b46a8"/><rect x="7" y="10" width="15" height="13" fill="#ccd" stroke="#2b46a8"/><path d="M9 13h11M9 16h11M9 19h11" stroke="#445" stroke-dasharray="1 1"/><use href="#Sp" transform="translate(11 0)"/></symbol>
<symbol id="mtl" viewBox="0 0 24 24"><path d="M3 10h6v13H3z" fill="#4a6cc0"/><path d="M3 14l6-2M3 18l6-2" stroke="#dde"/><rect x="14" y="1" width="7" height="11" fill="#223"/><rect x="11" y="10" width="7" height="7" fill="#f0b830" stroke="#333"/><use href="#Sp" transform="translate(1 2) scale(.9)"/></symbol>
<symbol id="mgm" viewBox="0 0 24 24"><path d="M3 9l10-4 9 3v11l-10 4-9-3z" fill="#5a80e0"/><path d="M13 12l9-4v11l-9 4z" fill="#2a48c0"/><circle cx="7" cy="16" r="4" fill="#e8302a" stroke="#e8c020"/><use href="#Sp" transform="translate(3 0)"/></symbol>
<symbol id="mmt" viewBox="0 0 24 24"><path d="M1 12h22" stroke="#3d8a9a"/><path d="M1 12v11h22V12" fill="#fff" stroke="#2b46a8" stroke-width="1.200"/><path d="M2 18c2-3 3 3 5 0s3 3 5 0 3 3 5 0 3 3 5 0M2 21h20" stroke="#2b46a8" fill="none"/><use href="#Sp" transform="translate(2 0)"/></symbol>
<symbol id="mins" viewBox="0 0 24 24"><path d="M3 12h6v11H3z" fill="#5a62bf"/><path d="M9 13l14-3M9 16l12-1M9 19l10 0" stroke="#888"/><use href="#Sp" transform="translate(3 1)"/></symbol>
</svg>

<div class="app">
  <header class="title">
    <span class="nx">NX</span>
    <span class="title-t">NX 10 - 加工 - [50-3.prt （ 修改的 ） ]</span>
  </header>
  <nav class="menubar">
    <svg class="mb-ic"><use href="#gen"/></svg>
    <span class="m w1">文件(<u>F</u>)</span><span class="m w1">编辑(<u>E</u>)</span><span class="m w1">视图(<u>V</u>)</span><span class="m w1">插入(<u>S</u>)</span><span class="m w1">格式(<u>R</u>)</span><span class="m w1">工具(<u>T</u>)</span><span class="m w1">装配(<u>A</u>)</span><span class="m w2">信息(<u>I</u>)</span><span class="m w3">分析(<u>L</u>)</span><span class="m w4">首选项(<u>P</u>)</span><span class="m w5">窗口(<u>O</u>)</span><span class="m w6">GC工具箱</span><span class="m w7">燕秀UG模具7.05</span><span class="m w8">星空 V6.936F</span><span class="m w9">帮助(<u>H</u>)</span><span class="m w10">机明软件</span><span class="m hb">HB_MOULD <u>M</u>6.6</span>
  </nav>

  <div class="tbs">
    <div class="row r1">
      <div class="bar b1a">
        <svg class="grip"><use href="#grip"/></svg>
        <svg class="ic"><use href="#globe"/></svg><span class="lab">启动</span><i class="car"></i>
        <svg class="ic"><use href="#newdoc"/></svg><svg class="ic"><use href="#folder"/></svg><svg class="ic"><use href="#save"/></svg><svg class="ic"><use href="#print"/></svg><b class="sep"></b>
        <svg class="ic"><use href="#scis"/></svg><svg class="ic"><use href="#copy"/></svg><svg class="ic dim"><use href="#paste"/></svg><svg class="ic"><use href="#x"/></svg><b class="sep"></b>
        <svg class="ic"><use href="#undo"/></svg><i class="car"></i><b class="sep"></b>
        <svg class="ic"><use href="#blackbox"/></svg><i class="car"></i><b class="sep"></b>
        <svg class="ic"><use href="#infod"/></svg><b class="sep"></b>
        <div class="search"><span>查找命令</span><svg class="mag" viewBox="0 0 16 16"><circle cx="9.500" cy="6" r="4.500" fill="#fff" stroke="#444"/><path d="M7 10l-4 5" stroke="#444" stroke-width="2"/></svg></div><i class="car lo"></i>
      </div>
      <div class="bar b1b">
        <svg class="grip"><use href="#grip"/></svg>
        <div class="combo c10"><span>10</span><i class="cd"></i></div>
        <svg class="ic"><use href="#layers"/></svg><svg class="ic"><use href="#csys"/></svg><i class="car n"></i><b class="sep"></b>
        <svg class="ic"><use href="#handd"/></svg><svg class="ic"><use href="#palette"/></svg><b class="sep g3"></b>
        <svg class="ic"><use href="#cdiam"/></svg><i class="car"></i><b class="sep"></b>
        <svg class="ic"><use href="#axis"/></svg><i class="car"></i><svg class="ic"><use href="#ruler"/></svg><i class="car n lo"></i>
      </div>
      <div class="bar b1c">
        <svg class="grip"><use href="#grip"/></svg>
        <svg class="ic"><use href="#fit"/></svg><i class="car"></i>
        <svg class="ic"><use href="#brkt"/></svg><i class="car n"></i>
        <svg class="ic"><use href="#cube"/></svg><i class="car n"></i>
        <svg class="ic"><use href="#oplane"/></svg><svg class="ic"><use href="#gplane"/></svg><i class="car n"></i>
        <svg class="ic"><use href="#blackbox"/></svg><i class="car"></i><b class="sep"></b>
      </div>
    </div>

    <div class="row r2">
      <div class="bar b2a">
        <svg class="grip"><use href="#grip"/></svg>
        <svg class="ic"><use href="#tedit"/></svg><svg class="ic"><use href="#tcut"/></svg><svg class="ic"><use href="#tcopy"/></svg><svg class="ic dim"><use href="#tcopy"/></svg><svg class="ic dim"><use href="#tpaste"/></svg><svg class="ic"><use href="#tdel"/></svg><svg class="ic"><use href="#tinfo"/></svg><svg class="ic dim"><use href="#tmov"/></svg><i class="car lo"></i>
      </div>
      <div class="bar b2b">
        <svg class="grip"><use href="#grip"/></svg>
        <svg class="ic"><use href="#gen"/></svg><svg class="ic"><use href="#replay"/></svg><svg class="ic"><use href="#verify"/></svg><svg class="ic"><use href="#postdoc"/></svg><svg class="ic"><use href="#chkm"/></svg><svg class="ic"><use href="#shop"/></svg><b class="sep"></b>
        <svg class="ic g2"><use href="#tpost"/></svg><svg class="ic"><use href="#tlist"/></svg><svg class="ic"><use href="#tclk"/></svg><i class="car lo"></i>
      </div>
      <div class="bar b2c">
        <svg class="grip"><use href="#grip"/></svg>
        <span class="act"><svg class="ic"><use href="#pv"/></svg></span><svg class="ic"><use href="#mv"/></svg><svg class="ic"><use href="#gv"/></svg><svg class="ic"><use href="#mtv"/></svg><i class="car n lo"></i>
      </div>
      <div class="bar b2d">
        <svg class="grip"><use href="#grip"/></svg>
        <svg class="ic"><use href="#lat1"/></svg><svg class="ic"><use href="#lat2"/></svg><i class="car"></i><svg class="ic"><use href="#lat3"/></svg><i class="car n"></i><svg class="ic"><use href="#lat4"/></svg><i class="car"></i><i class="car n lo"></i>
      </div>
      <div class="bar b2e">
        <svg class="grip"><use href="#grip"/></svg>
        <svg class="ic"><use href="#grid1"/></svg><svg class="ic"><use href="#grid2"/></svg><b class="sep"></b><svg class="ic"><use href="#bkt2"/></svg><svg class="ic"><use href="#fit"/></svg>
      </div>
    </div>

    <div class="row r3">
      <div class="bar b3a">
        <svg class="grip"><use href="#grip"/></svg>
        <svg class="ic" viewBox="0 0 24 24"><use href="#abs"/><text x="8" y="23" class="it">ABS</text></svg><svg class="ic"><use href="#xdim"/></svg><svg class="ic"><use href="#stack"/></svg><svg class="ic"><use href="#al"/></svg><svg class="ic"><use href="#ar"/></svg><svg class="ic"><use href="#dsw"/></svg><svg class="ic"><use href="#sqs"/></svg><svg class="ic"><use href="#blu"/></svg><svg class="ic"><use href="#rulb"/></svg><svg class="ic"><use href="#purp"/></svg><svg class="ic" viewBox="0 0 24 24"><use href="#rr"/><text x="8" y="9" class="ir">R</text></svg><svg class="ic"><use href="#mesh"/></svg><svg class="ic"><use href="#surf"/></svg><svg class="ic"><use href="#strp"/></svg><svg class="ic"><use href="#infc"/></svg><svg class="ic"><use href="#cyl"/></svg><svg class="ic"><use href="#rcube"/></svg><svg class="ic"><use href="#pink"/></svg><svg class="ic"><use href="#split"/></svg><svg class="ic"><use href="#split2"/></svg>
        <svg class="ic"><use href="#rect"/></svg><i class="car n"></i><svg class="ic"><use href="#hexa"/></svg><i class="car n"></i><svg class="ic" viewBox="0 0 24 24"><use href="#xyz"/><text x="9" y="6" class="iz">Z</text><text x="18" y="10" class="iz">Y</text><text x="18" y="23" class="iz">X</text></svg><svg class="ic"><use href="#rsq"/></svg><svg class="ic"><use href="#oo"/></svg><svg class="ic" viewBox="0 0 24 24"><text x="-1" y="19" class="ix" transform="rotate(-28 12 12)">Text</text><path d="M14 0l3 0-1 7z" fill="#e8c020"/></svg><svg class="ic"><use href="#wcube"/></svg><svg class="ic"><use href="#bell"/></svg><svg class="ic"><use href="#circ"/></svg><i class="car lo"></i>
      </div>
      <div class="bar b3b">
        <svg class="grip"><use href="#grip"/></svg>
        <span class="act"><svg class="ic"><use href="#tpv2"/></svg></span><svg class="ic"><use href="#tree2"/></svg><b class="sep"></b><svg class="ic"><use href="#binoc"/></svg><svg class="ic"><use href="#tgp"/></svg><svg class="ic"><use href="#tgo"/></svg><svg class="ic"><use href="#tgc"/></svg><svg class="ic"><use href="#tgp"/></svg>
      </div>
    </div>

    <div class="row r4">
      <div class="combo c1"><span>无选择过滤器</span><i class="cd"></i></div>
      <div class="combo c2"><span>整个装配</span><i class="cd"></i></div>
      <svg class="ic"><use href="#link"/></svg><b class="sep"></b>
      <svg class="ic"><use href="#ufil"/></svg><svg class="ic"><use href="#fil"/></svg><i class="car n"></i><svg class="ic"><use href="#utgt"/></svg><svg class="ic"><use href="#chn"/></svg><b class="sep"></b>
      <svg class="ic"><use href="#hexd"/></svg><svg class="ic"><use href="#rectd"/></svg><i class="car"></i><b class="sep"></b>
      <svg class="ic"><use href="#face"/></svg><span class="act"><svg class="ic"><use href="#cubea"/></svg></span>
    </div>
  </div>

  <main class="main">
    <aside class="rail">
      <div class="rt gear"><svg class="ri"><use href="#gear"/></svg></div>
      <div class="rt"><svg class="ri"><use href="#r1"/></svg></div>
      <div class="rt"><svg class="ri"><use href="#r2"/></svg></div>
      <div class="rt"><svg class="ri"><use href="#r3"/></svg></div>
      <div class="rt on"><svg class="ri"><use href="#r4"/></svg></div>
      <div class="rt"><svg class="ri"><use href="#r5"/></svg></div>
      <div class="rt"><svg class="ri"><use href="#r6"/></svg></div>
      <div class="rt"><svg class="ri"><use href="#r7"/></svg></div>
      <div class="rt sp"><svg class="ri"><use href="#r8"/></svg></div>
      <div class="rt sp"><svg class="ri"><use href="#r9"/></svg></div>
      <div class="rt sp"><svg class="ri"><use href="#clk"/></svg></div>
      <div class="rt"><svg class="ri"><use href="#r10"/></svg></div>
      <div class="rt"><svg class="ri"><use href="#r11"/></svg></div>
      <div class="rt"><svg class="ri"><use href="#r12"/></svg></div>
      <div class="rt"><svg class="ri"><use href="#r13"/></svg></div>
      <div class="rt"><svg class="ri"><use href="#r14"/></svg></div>
    </aside>

    <section class="panel">
      <div class="phead"><span>工序导航器 - 程序顺序</span><i class="maxi"></i></div>
      <div class="table">
        <div class="thead"><span class="h h1">名称</span><span class="h h2">换刀</span><span class="h h3">刀轨</span><span class="h h4">刀具</span><span class="h h5">几何体</span></div>
        <div class="tbody">
          <div class="tr"><span class="root">NC_PROGRAM</span></div>
          <div class="tr"><i class="dots d1"></i><svg class="fold"><use href="#fo"/></svg><span class="nm">未用项</span></div>
          <div class="tr sel"><i class="dots d2"></i><svg class="chk" viewBox="0 0 14 12"><path d="M1 7l4 4 8-10" fill="none" stroke="#22b030" stroke-width="2.800"/></svg><svg class="fold"><use href="#fo"/></svg><span class="selt">PROGRAM</span></div>
        </div>
        <div class="hscroll"><i class="al"></i><div class="thumb"><span>III</span></div><i class="ar"></i></div>
      </div>
      <div class="pbar"></div>
      <div class="dep"><span>相依性</span><svg class="chev" viewBox="0 0 12 10"><path d="M1 1l5 7 5-7" fill="none" stroke="#2f8fc8" stroke-width="1.600"/></svg></div>
    </section>

    <aside class="strip">
      <svg class="hgrip" viewBox="0 0 30 4"><path d="M0 2h30" stroke="#aaa" stroke-width="2" stroke-dasharray="2 2"/></svg>
      <svg class="si"><use href="#s1"/></svg><svg class="si"><use href="#s2"/></svg><svg class="si"><use href="#s3"/></svg><svg class="si"><use href="#s4"/></svg><svg class="si"><use href="#s5"/></svg><svg class="si"><use href="#s6"/></svg><svg class="si"><use href="#s7"/></svg><svg class="si"><use href="#s8"/></svg><svg class="si"><use href="#s9"/></svg><svg class="si"><use href="#s10"/></svg><svg class="si"><use href="#tpost"/></svg><svg class="si"><use href="#s20"/></svg><svg class="si"><use href="#s11"/></svg><svg class="si" viewBox="0 0 24 24"><use href="#s12"/><text x="3" y="21" class="ia">A</text></svg><svg class="si"><use href="#s13"/></svg><svg class="si"><use href="#s14"/></svg><svg class="si"><use href="#s15"/></svg><svg class="si"><use href="#s16"/></svg><svg class="si"><use href="#s17"/></svg><svg class="si"><use href="#print"/></svg><svg class="si"><use href="#s18"/></svg><svg class="si"><use href="#s19"/></svg><svg class="si"><use href="#s20"/></svg><svg class="si"><use href="#s21"/></svg>
      <i class="sarrow"></i>
    </aside>

    <section class="vp">
      <svg class="scene" viewBox="0 0 729 761">
        <g transform="translate(329 121) scale(.33333 .40816)">
          <path d="M160 725L105 1000 47 1218 60 1160 110 900z" fill="#5c5c5c"/>
          <path d="M170 685L903 805 833 1165 178 1062 105 1008z" fill="#cdcdcd" stroke="#3a3a3a" stroke-width="3" stroke-linejoin="round"/>
          <path d="M105 1008L178 1062 120 1272 47 1218z" fill="#696969" stroke="#333" stroke-width="3"/>
          <path d="M178 1062L815 1165 757 1378 120 1272z" fill="#515151" stroke="#333" stroke-width="3"/>
          <path d="M815 1165L833 1165 775 1378 757 1378z" fill="#686868" stroke="#333" stroke-width="2"/>
          <path d="M580 170L510 405 362 980 372 980 520 440 590 175z" fill="#5c5c5c" stroke="#333" stroke-width="2"/>
          <path d="M497 500L740 540 610 1022 362 980z" fill="#515151" stroke="#333" stroke-width="3"/>
          <path d="M505 443L750 480 740 540 497 503z" fill="#cfcfcf" stroke="#333" stroke-width="2"/>
          <path d="M585 175L815 212 745 478 520 440z" fill="#535353" stroke="#333" stroke-width="3"/>
          <path d="M815 212L825 212 752 480 745 478z" fill="#666"/>
          <path d="M588 147L830 187 825 210 582 172z" fill="#d2d2d2" stroke="#333" stroke-width="2"/>
          <path d="M706 170L712 110 716 100 710 140z" fill="#2f9a3a"/>
          <path d="M708 170L722 105 735 72 738 105z" fill="#1446c8"/>
          <path d="M720 180L873 206 800 198z" fill="#e02020"/>
        </g>
        <text x="556" y="149" class="lb lz">ZC</text>
        <text x="549" y="159" class="lb ly">YC</text>
        <text x="604" y="219" class="lb lx">XC</text>
        <g transform="translate(-521 -189)">
          <path d="M592 883L617 888 611 923 587 915z" fill="#a8a8a8"/>
          <path d="M589 899l26 5" stroke="#bcbcbc"/>
          <path d="M584 918L587 887" stroke="#2f9a3a" stroke-width="1.500"/>
          <path d="M584 918L589 888 593 887 588 918z" fill="#1446c8"/>
          <path d="M584 916L627 927 584 921z" fill="#d02020"/>
          <circle cx="584" cy="918" r="4" fill="#d8d8d8"/>
          <text x="589" y="887" class="lt lbz">Z</text>
          <text x="627" y="934" class="lt lbx">X</text>
        </g>
        <g transform="translate(482 707)">
          <path d="M0-41L36-20V20L0 41-36 20V-20z" fill="#2a7aa4"/>
          <path d="M0-41L-36-20-36-8C-28-24-8-30 12-26L26-14C22-28 12-36 0-41z" fill="#7d9cae"/>
          <path d="M-36-20V20L-22 28C-32 14-32-6-22-16-14-24-4-26 6-26-12-30-28-24-36-8z" fill="#4d87a8"/>
          <path d="M-36 20L0 41 36 20V4C30 24 4 34-20 20L-28 14z" fill="#146f9e"/>
          <path d="M12-26C24-22 32-8 30 8M-30 10C-26 26-6 32 10 28M-6-33C-22-30-32-16-32 0" fill="none" stroke="#222327" stroke-width=".8"/>
          <path d="M0-24L23-11V9L0 22-23 9V-11z" fill="#222327"/>
          <path d="M0-18L16-9 0 0-16-9z" fill="#367ca3"/>
          <path d="M-16-9L0 0V15L-16 5z" fill="#447ea5"/>
          <path d="M16-9L0 0V15L16 5z" fill="#14689a"/>
        </g>
        <text x="526" y="714" class="wm" textLength="60" lengthAdjust="spacingAndGlyphs">3D</text>
        <text x="590" y="713" class="wc">世界网</text>
        <text x="528" y="734" class="wu" textLength="174" lengthAdjust="spacingAndGlyphs">WWW.3DSJW.COM</text>
      </svg>
    </section>
  </main>
</div>

<div class="menu">
  <div class="mi"><svg class="mic"><use href="#tedit"/></svg><b>编辑...</b></div>
  <div class="mi"><svg class="mic"><use href="#tcut"/></svg><span>剪切</span></div>
  <div class="mi"><svg class="mic"><use href="#tcopy"/></svg><span>复制</span></div>
  <div class="mi"><svg class="mic"><use href="#mdel"/></svg><span>删除</span></div>
  <div class="mi"><svg class="mic" viewBox="0 0 24 24"><use href="#mrn"/><text x="4" y="23" class="im">ABC</text></svg><span>重命名</span></div>
  <hr class="ms">
  <div class="mi"><svg class="mic"><use href="#gen"/></svg><span>生成</span></div>
  <div class="mi"><svg class="mic"><use href="#gensub"/></svg><span>并行生成</span></div>
  <div class="mi"><svg class="mic"><use href="#replay"/></svg><span>重播</span></div>
  <hr class="ms">
  <div class="mi"><svg class="mic"><use href="#tpost"/></svg><span>后处理</span></div>
  <hr class="ms">
  <div class="mi hot sub"><i class="mic"></i><span>插入</span><i class="tri blue"></i></div>
  <hr class="ms">
  <div class="mi sub"><i class="mic"></i><span>对象</span><i class="tri"></i></div>
  <hr class="ms">
  <div class="mi sub"><i class="mic"></i><span>刀轨</span><i class="tri"></i></div>
  <hr class="ms">
  <div class="mi sub"><i class="mic"></i><span>工件</span><i class="tri"></i></div>
  <hr class="ms">
  <div class="mi sub"><i class="mic"></i><span>工作指导</span><i class="tri"></i></div>
  <hr class="ms">
  <div class="mi"><svg class="mic"><use href="#tinfo"/></svg><span>信息</span></div>
  <div class="mi"><svg class="mic"><use href="#tlist"/></svg><span>属性</span></div>
</div>

<div class="submenu">
  <div class="mi hot2"><svg class="mic"><use href="#mins"/></svg><span>工序...</span></div>
  <div class="mi"><svg class="mic"><use href="#mpg"/></svg><span>程序组...</span></div>
  <div class="mi"><svg class="mic"><use href="#mtl"/></svg><span>刀具...</span></div>
  <div class="mi"><svg class="mic"><use href="#mgm"/></svg><span>几何体...</span></div>
  <div class="mi"><svg class="mic"><use href="#mmt"/></svg><span>方法...</span></div>
</div>

<svg class="arrows" viewBox="0 0 1250 950">
  <path d="M63 365L96 311 96 300 111 288 110 307 102 310z" fill="#f4433c"/>
  <path d="M416 536L361 590 361 593 342 597 348 582 352 584z" fill="#f4433c"/>
</svg>
<div class="note n1"><i class="dot">1</i><i class="nip"></i><p>在这里<br>右击</p></div>
<div class="note n2"><i class="dot">2</i><i class="nip"></i><p>选择工序</p></div>
</body>
</html>
```

FILE: styles.css
```css
* { box-sizing: border-box; }
html, body { margin: 0; padding: 0; }
body { width: 1250px; height: 950px; overflow: hidden; position: relative; background: #fff; color: #222; font-family: "Liberation Sans", "Noto Sans CJK SC", sans-serif; font-size: 11px; }
.defs { position: absolute; }
i { font-style: normal; display: block; }
.app { width: 1250px; height: 950px; display: flex; flex-direction: column; overflow: hidden; }

.title { height: 26px; display: flex; align-items: center; flex: none; padding-left: 4px; }
.nx { font-size: 22px; font-weight: 700; color: #8aa2b2; width: 37px; border-right: 1px solid #ccc; line-height: 25px; letter-spacing: 0; }
.title-t { margin-left: 5px; font-size: 12.5px; color: #111; }

.menubar { height: 27px; background: #c8d7d6; display: flex; align-items: center; flex: none; padding: 0 0 3px 8px; font-size: 11px; color: #222; }
.mb-ic { width: 16px; height: 18px; flex: none; margin-right: 6px; }
.m { white-space: nowrap; flex: none; }
.w1 { width: 49.5px; } .w2 { width: 46px; } .w3 { width: 55px; } .w4 { width: 61px; } .w5 { width: 52px; } .w6 { width: 61px; } .w7 { width: 94px; } .w8 { width: 78px; } .w9 { width: 52px; } .w10 { width: 57px; }
.hb { letter-spacing: .25px; }
u { text-decoration: underline; }

.tbs { height: 136px; flex: none; border-bottom: 1px solid #999; background: #fff; }
.row { display: flex; overflow: hidden; align-items: center; }
.r1 { height: 34px; margin-top: 0; align-items: stretch; }
.r2 { height: 33px; margin-top: 1px; align-items: stretch; }
.r3 { height: 33px; margin-top: 1px; align-items: stretch; }
.r4 { height: 32px; margin-top: 1px; padding-left: 5px; }
.bar { display: flex; align-items: center; border-bottom: 2px solid #e4e4e4; border-right: 2px solid #e9e9e9; position: relative; flex: none; }
.grip { position: absolute; left: 2px; top: 2px; width: 4px; height: 28px; }
.ic { width: 24px; height: 24px; margin: 0 3.5px; flex: none; overflow: visible; }
.ic.g2 { margin-left: 5.5px; }
.dim { opacity: .38; }
.car { width: 14px; height: 8px; flex: none; position: relative; }
.car::after { content: ""; position: absolute; left: 50%; top: 2px; margin-left: -3.5px; border: 3.5px solid transparent; border-top: 4px solid #222; border-bottom: 0; }
.car.n { width: 12px; }
.car.lo { transform: translateY(7px); }
.sep { width: 4px; height: 24px; flex: none; position: relative; display: block; }
.sep::after { content: ""; position: absolute; left: 1px; top: 0; bottom: 0; width: 1px; background: #d9d9d9; }
.sep.g3 { margin-right: 3px; }
.lab { width: 26px; flex: none; font-size: 11px; }

.b1a { margin-left: 3px; width: 613px; padding-left: 4px; }
.b1b { margin-left: 4px; width: 347px; padding-left: 9px; }
.b1c { margin-left: 20px; width: 263px; padding-left: 5.5px; border-right: 0; }
.b2a { margin-left: 10px; width: 268px; padding-left: 6.5px; }
.b2b { margin-left: 25px; width: 307px; padding-left: 7.5px; }
.b2c { margin-left: 98px; width: 144px; padding-left: 7.5px; }
.b2d { margin-left: 99px; width: 179px; padding-left: 6.5px; }
.b2e { margin-left: 2px; width: 118px; padding-left: 7.5px; border-right: 0; }
.b3a { margin-left: 9px; width: 944px; padding-left: 7.5px; }
.b3b { margin-left: 90px; width: 207px; padding-left: 7.5px; border-right: 0; }
.act { width: 31px; height: 30px; background: #c8d7d6; border: 1px solid #9fb4b4; display: flex; align-items: center; justify-content: center; flex: none; }
.act .ic { margin: 0; }

.search { width: 125px; height: 21px; margin-left: 6.5px; border: 2px solid #aaa; display: flex; align-items: center; justify-content: space-between; padding: 0 5px 0 2px; flex: none; font-size: 11px; }
.mag { width: 16px; height: 16px; }
.combo { height: 20px; border: 1px solid #999; display: flex; align-items: center; justify-content: space-between; padding: 0 4px 0 2px; flex: none; font-size: 11px; background: #fff; }
.cd { width: 0; height: 0; border: 4px solid transparent; border-top: 4px solid #111; border-bottom: 0; margin-right: 2px; }
.c10 { width: 49px; height: 21px; border-width: 2px; border-color: #aaa; margin-right: 4.5px; }
.c1 { width: 132px; margin-right: 8px; }
.c2 { width: 140px; margin-right: 2.5px; }

.main { flex: 1; display: flex; min-height: 0; }
.rail { width: 32px; flex: none; background: #dcdcdc; border-right: 1px solid #a8a8a8; display: flex; flex-direction: column; }
.rt { height: 42px; display: flex; align-items: center; justify-content: center; flex: none; }
.rt.gear { height: 25px; margin-bottom: 17px; }
.rt.sp { margin-top: 12px; }
.rt.on { background: #fff; margin-left: 2px; margin-right: -1px; border: 1px solid #aaa; border-right: 0; height: 45px; margin-top: -2px; margin-bottom: -1px; padding-right: 2px; position: relative; z-index: 1; }
.ri { width: 25px; height: 25px; flex: none; }

.panel { width: 455px; flex: none; background: #fff; padding-left: 6px; display: flex; flex-direction: column; }
.phead { height: 28px; display: flex; align-items: center; justify-content: space-between; padding: 0 19px 0 4px; font-size: 12px; flex: none; }
.maxi { width: 11px; height: 10px; border: 1px solid #222; border-top-width: 3px; margin-top: 2px; }
.table { width: 438px; height: 710px; border: 1px solid #dcdcdc; border-width: 1px 1px 2px 1px; padding: 1px; flex: none; display: flex; flex-direction: column; }
.thead { height: 21px; flex: none; background: #f0f0f0; display: flex; align-items: center; border-bottom: 1px solid #dfdfdf; font-size: 12px; }
.h { display: block; height: 100%; line-height: 20px; border-right: 1px solid #d0d0d0; padding-left: 6px; flex: none; color: #333; }
.h1 { width: 207px; } .h2 { width: 46px; } .h3 { width: 42px; } .h4 { width: 65px; } .h5 { width: 73px; border-right: 0; }
.tbody { height: 666px; flex: none; position: relative;
  background:
    linear-gradient(#000, #000) 206px 0 / 1px 100% no-repeat,
    linear-gradient(#eee, #eee) 252px 0 / 1px 100% no-repeat,
    linear-gradient(#eee, #eee) 294px 0 / 1px 100% no-repeat,
    linear-gradient(#eee, #eee) 359px 0 / 1px 100% no-repeat,
    linear-gradient(#eee, #eee) 432px 0 / 1px 100% no-repeat,
    repeating-linear-gradient(#fff 0, #fff 19px, #e9e9e9 19px, #e9e9e9 20px, #fafafa 20px, #fafafa 39px, #e9e9e9 39px, #e9e9e9 40px); }
.tr { height: 20px; display: flex; align-items: center; font-size: 12px; position: relative; }
.root { padding-left: 4px; color: #333; }
.dots { position: absolute; border-left: 1px dotted #888; border-bottom: 1px dotted #888; }
.d1 { left: 9px; top: 8px; width: 10px; height: 1px; border-left: 0; }
.d2 { left: 9px; top: -12px; width: 10px; height: 22px; }
.fold { width: 15px; height: 15px; position: absolute; left: 20px; top: 2px; }
.tr .nm { position: absolute; left: 38px; top: 1px; }
.sel .fold { left: 36px; }
.chk { width: 14px; height: 12px; position: absolute; left: 21px; top: 4px; }
.selt { position: absolute; left: 51px; top: 0; height: 19px; background: #3399ff; color: #fff; padding-left: 3px; line-height: 19px; width: 383px; }
.tr.sel::after { content: ""; position: absolute; left: 206px; top: 0; width: 1px; height: 19px; background: #000; }
.hscroll { height: 17px; margin-top: 1px; background: #f0f0f0; position: relative; flex: none; display: flex; align-items: center; }
.hscroll .al { position: absolute; left: 8px; top: 4px; border: 4px solid transparent; border-right: 4px solid #333; border-left: 0; }
.hscroll .ar { position: absolute; right: 6px; top: 4px; border: 4px solid transparent; border-left: 4px solid #333; border-right: 0; }
.thumb { margin-left: 18px; width: 247px; height: 16px; border: 1px solid #999; border-radius: 2px; background: linear-gradient(#f4f4f4, #c8c8c8 55%, #dcdcdc); text-align: center; font-size: 9px; line-height: 13px; color: #333; }
.pbar { width: 438px; height: 5px; margin-top: 2px; background: #d4d4d4; border: 1px solid #aaa; flex: none; }
.dep { flex: 1; display: flex; justify-content: space-between; align-items: center; padding: 0 16px 0 7px; font-size: 13px; color: #3a9ad4; }
.chev { width: 12px; height: 10px; margin-top: -4px; }

.strip { width: 35px; flex: none; background: #fff; border-left: 1px solid #aaa; border-right: 1px solid #f0a050; display: flex; flex-direction: column; align-items: center; padding-top: 2px; position: relative; }
.hgrip { width: 28px; height: 4px; flex: none; }
.si { width: 24px; height: 24px; margin: 3.5px 0; flex: none; }
.si:first-of-type { margin-top: 4px; }
.sarrow { margin-top: 3px; margin-left: -22px; border: 4px solid transparent; border-right: 4px solid #333; border-left: 0; }

.vp { flex: 1; background: #222327; min-width: 0; position: relative; }
.scene { display: block; width: 729px; height: 761px; }
.lb { font-size: 13px; font-family: "Liberation Sans", sans-serif; }
.lz { fill: #1a4ee0; } .ly { fill: #2f9a3a; } .lx { fill: #d42828; }
.lt { font-size: 13px; font-family: "Liberation Sans", sans-serif; }
.lbz { fill: #1a4ee0; } .lbx { fill: #d42828; }
.wm { font-size: 44px; font-weight: 700; fill: #8f9094; font-family: "Liberation Sans", sans-serif; }
.wc { font-size: 38px; font-weight: 700; fill: #8f9094; font-family: "Noto Sans CJK SC", sans-serif; }
.wu { font-size: 11px; font-weight: 700; fill: #8f9094; font-family: "Liberation Sans", sans-serif; }
.it { font-size: 7px; font-weight: 700; fill: #222; font-family: "Liberation Sans", sans-serif; }
.ir { font-size: 10px; fill: #3a46b0; font-family: "Liberation Sans", sans-serif; }
.iz { font-size: 8px; font-weight: 700; fill: #444; font-family: "Liberation Sans", sans-serif; }
.ix { font-size: 14px; font-weight: 700; fill: #8a3ab0; font-family: "Liberation Serif", serif; }
.ia { font-size: 21px; fill: #222; font-family: "Liberation Serif", serif; }
.im { font-size: 6px; font-weight: 700; fill: #fff; font-family: "Liberation Sans", sans-serif; }

.menu { position: absolute; left: 119px; top: 284px; width: 115px; height: 558px; background: #fff; border: 1px solid #a8a8a8; padding: 2px 0; z-index: 3; }
.submenu { position: absolute; left: 232px; top: 585px; width: 112px; height: 155px; background: #fff; border: 1px solid #a8a8a8; padding: 1px; z-index: 4; }
.mi { height: 30px; display: flex; align-items: center; margin: 0 2px; padding-left: 5px; font-size: 11px; color: #222; position: relative; border: 1px solid transparent; }
.mi b { font-weight: 700; }
.mic { width: 24px; height: 24px; margin-right: 5px; flex: none; }
.submenu .mi { margin: 0 1px; padding-left: 4px; }
.submenu .mic { width: 22px; height: 22px; margin-right: 7px; }
.ms { height: 1px; border: 0; background: #dcdcdc; margin: 4px 12px 4px 12px; }
.hot { background: #fdf4dc; border-color: #fdd56d; }
.hot2 { background: #fdf4dc; border-color: #fdd56d; }
.tri { position: absolute; right: 6px; top: 10px; border: 4px solid transparent; border-left: 4px solid #111; border-right: 0; }
.tri.blue { border-left-color: #2a7ab0; }

.arrows { position: absolute; left: 0; top: 0; width: 1250px; height: 950px; z-index: 5; pointer-events: none; }
.note { position: absolute; z-index: 6; background: rgba(63, 63, 63, .86); border-radius: 5px; color: #fff; font-family: "Noto Sans CJK SC", sans-serif; font-size: 27px; line-height: 36px; }
.note p { margin: 0; }
.n1 { left: 78px; top: 351px; width: 100px; height: 85px; padding: 6px 0 0 6px; }
.n2 { left: 444px; top: 516px; width: 128px; height: 49px; padding: 6px 0 0 5px; }
.dot { position: absolute; left: -29px; width: 20px; height: 20px; border-radius: 50%; background: #ee3338; font-size: 12px; line-height: 20px; text-align: center; font-family: "Liberation Sans", sans-serif; font-weight: 700; }
.n1 .dot { top: 13px; }
.n2 .dot { top: 14px; }
.nip { position: absolute; left: -5px; border: 5px solid transparent; border-right: 5px solid rgba(63, 63, 63, .86); border-left: 0; }
.n1 .nip { top: 18px; }
.n2 .nip { top: 19px; }
```
